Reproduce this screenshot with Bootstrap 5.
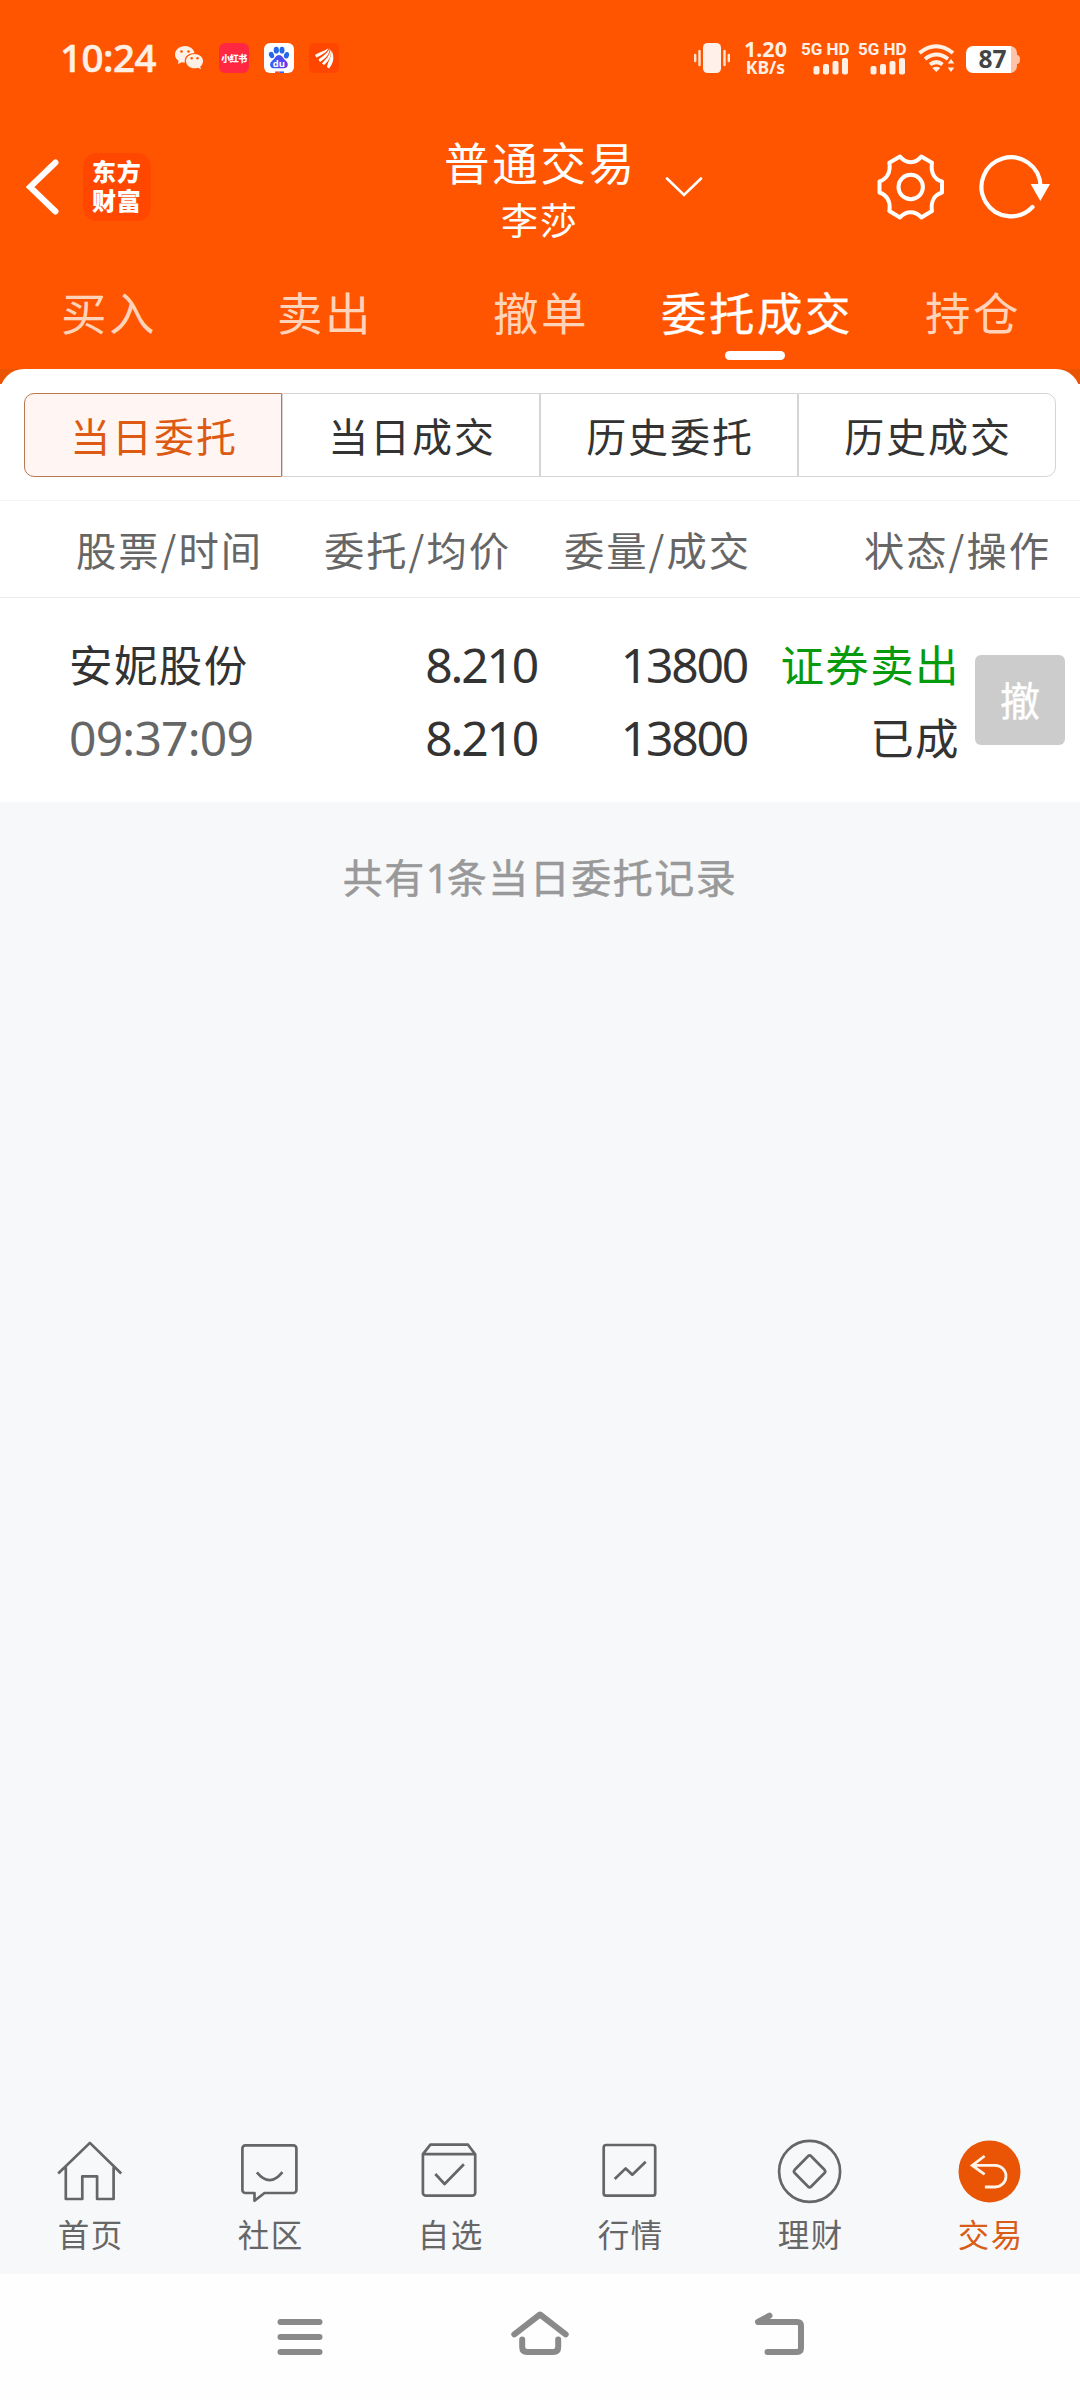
<!DOCTYPE html>
<html lang="zh-CN">
<head>
<meta charset="utf-8">
<meta name="viewport" content="width=1080">
<title>普通交易</title>
<link href="https://cdn.jsdelivr.net/npm/bootstrap@5.3.0/dist/css/bootstrap.min.css" rel="stylesheet">
<style>
  :root { --brand: #ff5500; --deep: #ea5504; --ink: #333; --soft: #666; --page: #f7f8fa; }
  body { width: 1080px; height: 2400px; overflow: hidden; background: var(--page); color: var(--ink);
    font-family: "Noto Sans CJK SC", sans-serif; letter-spacing: 1.8px; line-height: 1; }
  svg { display: block; flex: none; }
  .latin { font-family: "Noto Sans", "Noto Sans CJK SC", sans-serif; }
  .app-head { background: var(--brand); height: 369px; color: #fff; }
  .status-row { height: 116px; padding: 0 60px; color: #fff0e6; font-family: "Noto Sans", sans-serif; }
  .status-row .clock { width: 115px; font-size: 38.5px; font-weight: 500; letter-spacing: -.5px; padding-bottom: 1px; -webkit-text-stroke: .6px; }
  .app-chip { width: 30px; height: 30px; border-radius: 6px; }
  .xhs { background: #ff2741; color: #fff; font: 900 9px "Noto Sans CJK SC", sans-serif; letter-spacing: -.5px; white-space: nowrap; }
  .speed { width: 45px; font-size: 21.5px; line-height: 19px; font-weight: 700; letter-spacing: 0; white-space: nowrap; }
  .speed small { font-size: 17.5px; letter-spacing: 0; display: block; line-height: 19px; font-weight: 700; }
  .sim { width: 48px; font: 700 17px/17px Roboto, sans-serif; letter-spacing: 0; white-space: nowrap; }
  .title-row { height: 142px; padding: 0 29px 0 26px; }
  .side { flex: 1 1 0; }
  .brand-logo { width: 68px; height: 68px; border-radius: 14px; background: #ff4700; margin-left: 24px;
    font: 900 24px/29px "Noto Sans CJK SC", sans-serif; letter-spacing: .8px; padding: 3px 0 0 9px; }
  .title-main { font-size: 45.5px; line-height: 58px; letter-spacing: 2.7px; margin: 6px -4px 0 0; }
  .title-sub { font-size: 37px; line-height: 58px; letter-spacing: 2px; margin-right: -3px; }
  .top-tabs { height: 111px; }
  .top-tabs .nav-link { height: 111px; padding: 28px 0 0 2px; font-size: 45.5px; line-height: 50px; letter-spacing: 2.5px; color: #ffd3ba; white-space: nowrap; }
  .top-tabs .nav-link.active { color: #fff; -webkit-text-stroke: .3px; }
  .top-tabs .nav-link.active::after { content: ""; display: block; width: 60px; height: 9px; border-radius: 5px; background: #fff; margin: 15px auto 0; transform: translateX(-2px); }
  .sheet-wrap { background: linear-gradient(var(--deep) 15px, #fff 15px); }
  .sheet { background: #fff; border-radius: 24px 24px 0 0; height: 433px; }
  .seg-area { padding: 24px 24px 0; height: 131px; }
  .seg-area .btn { height: 84px; border: 1px solid #d5d5d5; border-radius: 0; font-size: 40px; letter-spacing: 1.9px; padding: 0 0 1px 2px; color: var(--ink); background: #fff; line-height: 1; }
  .seg-area .btn:first-child { border-radius: 10px 0 0 10px; }
  .seg-area .btn:last-child { border-radius: 0 10px 10px 0; }
  .seg-area .btn.active { color: #dd5a12; border-color: #b87850; background: #fff6f3; }
  .cols-head { height: 98px; border-top: 1px solid #f4f4f4; border-bottom: 1px solid #e9e9e9; color: var(--soft); font-size: 40.3px; letter-spacing: 2px; padding: 0 0 0 76px; white-space: nowrap; }
  .cols-head span:nth-child(1) { width: 248px; }
  .cols-head span:nth-child(2) { width: 240px; }
  .cols-head span:nth-child(3) { width: 300px; }
  .order { height: 204px; padding: 29px 15px 0 69px; font-size: 43.5px; letter-spacing: 1.4px; line-height: 73px; white-space: nowrap; }
  .order .latin { font-size: 48px; letter-spacing: -2.2px; padding-top: 1px; }
  .c-name { width: 201px; } .c-price { width: 267px; } .c-qty { width: 210px; } .c-state { width: 213px; }
  .order .c-name .latin { color: var(--soft); letter-spacing: -.8px; }
  .sell { color: #079a0c; }
  .revoke { width: 90px; height: 90px; margin: 28px 0 0 15px; border-radius: 6px; background: #ccc; color: #fff; font-size: 40px; -webkit-text-stroke: .4px; letter-spacing: 0; line-height: 1; padding: 0 0 2px; border: 0; }
  .revoke:hover { background: #c4c4c4; color: #fff; }
  .tally { color: #999; font-size: 40px; line-height: 60px; padding-top: 44px; letter-spacing: 1.5px; -webkit-text-stroke: .5px; }
  .tally .latin { letter-spacing: -2px; }
  .tab-bar { height: 139px; color: #666; font-size: 31.5px; letter-spacing: 1.5px; }
  .tab-bar svg { fill: none; stroke: #666; stroke-width: 2.700; stroke-linejoin: round; }
  .tab-bar .here { color: #d95c18; }
  .tab-bar span { line-height: 46px; margin: 5px -1.5px 0 0; }
  .sys-bar { height: 126px; background: #fefefe; padding: 0 195px; }
  .sys-bar svg { fill: none; stroke: #8a8a8a; stroke-width: 6; stroke-linecap: round; stroke-linejoin: round; }
</style>
<script src="https://cdn.jsdelivr.net/npm/bootstrap@5.3.0/dist/js/bootstrap.bundle.min.js"></script>
</head>
<body class="d-flex flex-column">
<header class="app-head">
  <div class="status-row d-flex align-items-center">
    <span class="clock">10:24</span>
    <svg width="28" height="26" viewBox="0 0 28 26" fill="#fff0e6"><path d="M10 1C4.500 1 0 4.700 0 9.500c0 2.700 1.300 4.700 3.500 6.200L3 19l3.600-1.800c1 .2 2.200.4 3.300.3C9 11.500 13.500 8 19.500 8 18.800 4 14.800 1 10 1z"/><path d="M28 16c0-4-3.800-7-8.500-7S11 12 11 16s3.800 7.300 8.500 7.300c1.300 0 2.500-.2 3.500-.6l2.800 1.600-.5-2.800C27 20.200 28 18.200 28 16z"/><g fill="#f50"><circle cx="6.500" cy="6.500" r="1.300"/><circle cx="13.500" cy="6.500" r="1.300"/><circle cx="16.700" cy="13.300" r="1.200"/><circle cx="22.500" cy="13.300" r="1.200"/></g></svg>
    <div class="app-chip xhs d-flex align-items-center justify-content-center ms-3">小红书</div>
    <svg style="margin-left:15px" width="30" height="30" viewBox="0 0 30 30"><defs><linearGradient id="paw" x1="0" x2="1"><stop offset="0" stop-color="#2a66f5"/><stop offset="1" stop-color="#6d35e8"/></linearGradient></defs><rect width="30" height="30" rx="6" fill="#fff"/><g fill="#2268e8"><ellipse cx="7.500" cy="12" rx="2.500" ry="3.300" transform="rotate(-20 7.500 12)"/><ellipse cx="12.300" cy="7.200" rx="2.600" ry="3.400"/><ellipse cx="18" cy="7.200" rx="2.500" ry="3.400"/><ellipse cx="22.500" cy="12.300" rx="2.500" ry="3.300" transform="rotate(15 22.500 12.300)"/></g><path d="M15 12c3 0 4 3 6 5 2 1.800 3.500 3.500 2.500 6-1 2.800-4 2.200-8.500 2.200S7.500 26 6.300 23c-1-2.500.8-4.500 2.700-6 2.200-2 3-5 6-5z" fill="url(#paw)"/><text x="15" y="23.500" text-anchor="middle" fill="#fff" font-family="Open Sans" font-size="9.500" font-weight="700" letter-spacing="0">du</text><path d="M11 29.200h4.500" stroke="#e43" stroke-width="1.500"/><path d="M15.500 29.200H20" stroke="#35e" stroke-width="1.500"/></svg>
    <svg style="margin-left:15px" width="30" height="30" viewBox="0 0 30 30"><rect width="30" height="30" rx="5" fill="#ff4600"/><g fill="#fff"><path d="M6 12C10 9 15 8.500 19.500 5 18 9.500 13 11.500 7.500 14.500z"/><path d="M9.500 16.500C14 13 18.500 10.500 20.500 5.500 21 11 17 15 11 19z"/><path d="M13 20.500c4-4.500 8-8 8.500-14.500 1.500 6-1 11.500-6.500 16z"/><path d="M18 24c1-5.500 4.500-10 4.500-16.500 3 6 2.500 12-2.500 18z"/></g></svg>
    <div class="ms-auto d-flex align-items-center">
      <svg width="36" height="30" viewBox="0 0 36 30"><rect x="9" width="18" height="30" rx="4.500" fill="#fff0e9"/><path d="M5.500 8v14M1.200 12v6M30.500 8v14M34.800 12v6" stroke="#ffe5d5" stroke-width="2.400" stroke-linecap="round"/></svg>
      <div class="speed text-center" style="margin-left:13px">1.20<small>KB/s</small></div>
      <div class="sim" style="margin-left:13px">5G HD<svg width="48" height="17" viewBox="0 0 48 17" fill="#fff0e6"><rect x="12.500" y="8" width="6" height="8.500" rx="2"/><rect x="22" y="6" width="6" height="10.500" rx="2"/><rect x="31.500" y="3" width="6" height="13.500" rx="2"/><rect x="41" y="0" width="6" height="16.500" rx="2"/></svg></div>
      <div class="sim" style="margin-left:9px">5G HD<svg width="48" height="17" viewBox="0 0 48 17" fill="#fff0e6"><rect x="12.500" y="8" width="6" height="8.500" rx="2"/><rect x="22" y="6" width="6" height="10.500" rx="2"/><rect x="31.500" y="3" width="6" height="13.500" rx="2"/><rect x="41" y="0" width="6" height="16.500" rx="2"/></svg></div>
      <svg style="margin-left:12px" width="37" height="30" viewBox="0 0 37 30"><g fill="none" stroke="#fff0e6" stroke-width="4"><path d="M1.500 10q16.500-13.500 33.500 0"/><path d="M7 16q11.500-9 23 0"/><path d="M12 21.500q6.500-4.800 12.500 0"/></g><path d="M18.300 29l-4-4q4-2.600 8 0zM33 16l3.300 4.500h-6.600zM33 29l3.300-4.500h-6.600z" fill="#fff0e6"/></svg>
      <svg style="margin:3px 0 0 11px" overflow="visible" width="54" height="27" viewBox="0 0 54 27"><path d="M43 0h1a7 7 0 017 7v2q3 0 3 4.500T51 18v2a7 7 0 01-7 7h-1z" fill="#ffc4a8"/><path d="M7 0h38v27H7a7 7 0 01-7-7V7a7 7 0 017-7z" fill="#fff"/><text x="26.500" y="22" text-anchor="middle" fill="#444" font-family="Noto Sans" font-size="24.500" font-weight="700" letter-spacing="0">87</text></svg>
    </div>
  </div>
  <div class="title-row d-flex align-items-center">
    <div class="side d-flex align-items-center">
      <svg width="33" height="56" viewBox="0 0 33 56" fill="none" stroke="#fff" stroke-width="6"><path d="M29.500 3.500L4 28l25.500 24.500" stroke-linecap="round"/></svg>
      <div class="brand-logo">东方<br>财富</div>
    </div>
    <div class="text-center">
      <div class="title-main">普通交易</div>
      <div class="title-sub">李莎</div>
    </div>
    <div class="side d-flex align-items-center">
      <svg style="margin-left:32px" width="38" height="20" viewBox="0 0 38 20" fill="none" stroke="#fff" stroke-width="2.600" stroke-linecap="round"><path d="M2 1.500L19 18 36 1.500"/></svg>
      <svg class="ms-auto" width="70" height="68" viewBox="0 0 70 68" fill="none" stroke="#fff" stroke-width="4" stroke-linejoin="round"><path d="M24 3.500C30 11 39.500 11 45.300 3.500L56 9.700C54.500 19 58 26.500 66 28.500v11C58 42 54.500 49 56 58L45.300 64.500C39.500 57.500 30 57.500 24 64.500L13.300 58C15 49 11 42 3.500 39.500v-11C11 26 15 19 13.300 9.700z"/><circle cx="34.700" cy="34" r="12.200"/></svg>
      <svg style="margin-left:31px" width="74" height="68" viewBox="0 0 74 68"><path d="M63.500 33A29.500 29.500 0 1 0 55.500 54" fill="none" stroke="#fff" stroke-width="4.200" stroke-linecap="round"/><path d="M53.700 31H73l-9.700 17z" fill="#fff"/></svg>
    </div>
  </div>
  <nav class="top-tabs nav nav-justified flex-nowrap text-center">
    <a class="nav-link col">买入</a><a class="nav-link col">卖出</a><a class="nav-link col">撤单</a><a class="nav-link col active">委托成交</a><a class="nav-link col">持仓</a>
  </nav>
</header>
<main class="flex-grow-1">
  <div class="sheet-wrap"><section class="sheet">
    <div class="seg-area"><div class="row g-0">
      <button class="btn col active">当日委托</button><button class="btn col">当日成交</button><button class="btn col">历史委托</button><button class="btn col">历史成交</button>
    </div></div>
    <div class="cols-head d-flex align-items-center"><span>股票/时间</span><span>委托/均价</span><span>委量/成交</span><span>状态/操作</span></div>
    <div class="order d-flex">
      <div class="c-name"><div>安妮股份</div><div class="latin">09:37:09</div></div>
      <div class="c-price latin text-end"><div>8.210</div><div>8.210</div></div>
      <div class="c-qty latin text-end"><div>13800</div><div>13800</div></div>
      <div class="c-state text-end"><div class="sell">证券卖出</div><div>已成</div></div>
      <button class="btn revoke">撤</button>
    </div>
  </section></div>
  <p class="tally text-center mb-0">共有<span class="latin">1</span>条当日委托记录</p>
</main>
<nav class="tab-bar row g-0 text-center">
  <div class="col d-flex flex-column align-items-center"><svg width="80" height="70" viewBox="0 0 80 70"><path d="M8.200 38.500L39.900 7.900l31.300 30.600M15.800 32.300V64h16.500V41.300h14.800V64h16.500V32.300"/></svg><span>首页</span></div>
  <div class="col d-flex flex-column align-items-center"><svg width="80" height="70" viewBox="0 0 80 70"><path d="M15.400 10.300h48a3 3 0 013 3V55a3 3 0 01-3 3H34.500l-10 7.700V58h-9.100a3 3 0 01-3-3V13.300a3 3 0 013-3z"/><path d="M26.900 37.400q12.800 15.600 25.500-.3"/></svg><span>社区</span></div>
  <div class="col d-flex flex-column align-items-center"><svg width="80" height="70" viewBox="0 0 80 70"><path d="M12.900 19.200l7.500-9.500H58l7.200 9.500v38.500a3 3 0 01-3 3H15.900a3 3 0 01-3-3zh52.300M25.300 39l9.300 10 19.300-19.700"/></svg><span>自选</span></div>
  <div class="col d-flex flex-column align-items-center"><svg width="80" height="70" viewBox="0 0 80 70"><rect x="13.700" y="10" width="51.500" height="50.700" rx="2.500"/><path d="M24.700 44l11-10.600 6.600 6.300 13.400-13"/></svg><span>行情</span></div>
  <div class="col d-flex flex-column align-items-center"><svg width="80" height="70" viewBox="0 0 80 70"><circle cx="39.600" cy="36.400" r="30.500"/><path d="M38 21.300q1.600-1.700 3.200 0L54.500 34.800q1.500 1.600 0 3.200L41.200 51.500q-1.600 1.700-3.200 0L24.700 38q-1.500-1.600 0-3.200z"/></svg><span>理财</span></div>
  <div class="col d-flex flex-column align-items-center here"><svg width="80" height="70" viewBox="0 0 80 70"><circle cx="39.500" cy="36.400" r="31" fill="#e95504" stroke="none"/><path d="M34.600 21l-12.400 9.400 12.400 9M22.200 30.400h23a10.800 10.800 0 010 21.600H34.900" stroke="#fff3ea" stroke-width="2.800" stroke-linejoin="miter"/></svg><span>交易</span></div>
</nav>
<footer class="sys-bar d-flex align-items-center justify-content-between">
  <svg width="210" height="60" viewBox="195 2307 210 60"><path d="M280.500 2322h39M280.500 2337h39M280.500 2352h39"/></svg>
  <svg width="210" height="60" viewBox="435 2307 210 60"><path d="M514.300 2334.300L540 2314.500l25.700 19.800M522.200 2339.500v7.500q0 5 5 5h26q5 0 5-5v-7.500"/></svg>
  <svg width="210" height="60" viewBox="675 2307 210 60"><path d="M769.500 2315.700L758 2322h39q4 0 4 4v22q0 4-4 4H767.500"/></svg>
</footer>
</body>
</html>
